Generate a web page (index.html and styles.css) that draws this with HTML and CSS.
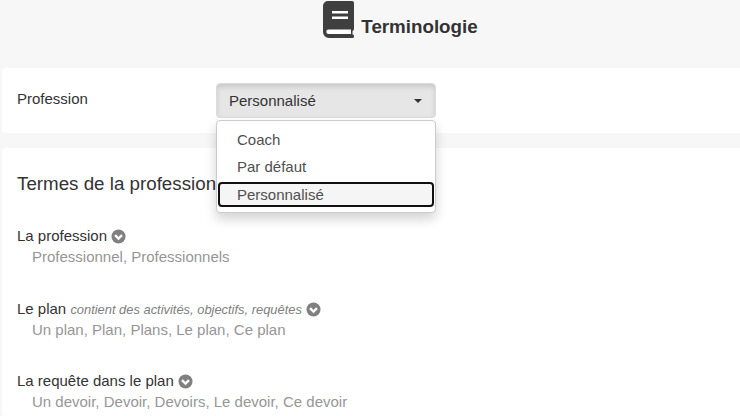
FILE: index.html
```html
<!DOCTYPE html>
<html lang="fr">
<head>
<meta charset="utf-8">
<title>Terminologie</title>
<link rel="stylesheet" href="styles.css">
</head>
<body>
<header class="page-head">
  <svg class="book" viewBox="0 0 32 37" width="32" height="37" aria-hidden="true">
    <path fill="#3f3f3f" d="M5 0H29a2 2 0 0 1 2 2V28a2 2 0 0 1-1.500 1.900V33.500H30a1.300 1.300 0 0 1 1 1.300V35.500a1.500 1.500 0 0 1-1.500 1.500H6a6 6 0 0 1-6-6V5a5 5 0 0 1 5-5Z"/>
    <path fill="#fff" d="M9 10H25V12.500H9ZM9 15.500H25V18H9ZM5.500 28.500H28V33H5.500a2.250 2.250 0 0 1 0-4.500Z"/>
  </svg>
  <h1 class="page-title">Terminologie</h1>
</header>
<main>
  <section class="card profession-card">
    <span class="field-label">Profession</span>
    <div class="select">
      <button class="select-btn" type="button"><span>Personnalisé</span><i class="caret"></i></button>
      <ul class="menu">
        <li class="menu-item">Coach</li>
        <li class="menu-item">Par défaut</li>
        <li class="menu-item active">Personnalisé</li>
      </ul>
    </div>
  </section>
  <section class="card terms-card">
    <h2 class="terms-title">Termes de la profession</h2>
    <div class="term">
      <div class="term-name">La profession <svg class="chev" viewBox="0 0 16 16" width="15" height="15" aria-hidden="true"><circle cx="8" cy="8" r="7.500" fill="#808080"/><path d="M4.300 6.600 8 10.200l3.700-3.600" fill="none" stroke="#fff" stroke-width="2.500"/></svg></div>
      <div class="term-values">Professionnel, Professionnels</div>
    </div>
    <div class="term">
      <div class="term-name">Le plan <em class="term-note">contient des activités, objectifs, requêtes</em> <svg class="chev" viewBox="0 0 16 16" width="15" height="15" aria-hidden="true"><circle cx="8" cy="8" r="7.500" fill="#808080"/><path d="M4.300 6.600 8 10.200l3.700-3.600" fill="none" stroke="#fff" stroke-width="2.500"/></svg></div>
      <div class="term-values">Un plan, Plan, Plans, Le plan, Ce plan</div>
    </div>
    <div class="term">
      <div class="term-name">La requête dans le plan <svg class="chev" viewBox="0 0 16 16" width="15" height="15" aria-hidden="true"><circle cx="8" cy="8" r="7.500" fill="#808080"/><path d="M4.300 6.600 8 10.200l3.700-3.600" fill="none" stroke="#fff" stroke-width="2.500"/></svg></div>
      <div class="term-values">Un devoir, Devoir, Devoirs, Le devoir, Ce devoir</div>
    </div>
  </section>
</main>
</body>
</html>
```
FILE: styles.css
```css
* { box-sizing: border-box; }
html, body { height: 100%; }
body {
  margin: 0;
  height: 416px;
  overflow: hidden;
  background: #f7f7f7;
  color: #333;
  font-family: "Liberation Sans", Arial, sans-serif;
  font-size: 15px;
  line-height: 20px;
}
.page-head {
  height: 68px;
  display: flex;
  justify-content: center;
  align-items: flex-start;
  gap: 6px;
  padding: 1px 0 0 61px;
}
.book { display: block; }
.page-title {
  margin: 15px 0 0;
  font-size: 18.750px;
  line-height: 22px;
  font-weight: 700;
  color: #333;
}
main { padding-left: 2px; }
.card { background: #fff; border-radius: 3px 0 0 3px; }
.profession-card {
  height: 65px;
  margin-bottom: 15px;
  padding: 15px 0 0 15px;
  display: flex;
  align-items: flex-start;
}
.field-label { width: 199px; padding-top: 6px; line-height: 20px; flex: none; }
.select { position: relative; width: 220px; }
.select-btn {
  display: flex;
  justify-content: space-between;
  align-items: center;
  width: 100%;
  height: 35px;
  padding: 0 13px 0 12px;
  border: 1px solid #dcdcdc;
  border-radius: 4px;
  background: #e6e6e6;
  box-shadow: inset 0 3px 5px rgba(0,0,0,.125);
  color: #333;
  font: inherit;
}
.caret {
  width: 0;
  height: 0;
  border-top: 4px solid #333;
  border-left: 4px solid transparent;
  border-right: 4px solid transparent;
}
.menu {
  position: absolute;
  top: 37px;
  left: 0;
  width: 220px;
  margin: 0;
  padding: 5px 0;
  list-style: none;
  background: #fff;
  border: 1px solid #ccc;
  border-radius: 4px;
  box-shadow: 0 6px 12px rgba(0,0,0,.175);
  z-index: 2;
}
.menu-item {
  height: 27px;
  padding: 4px 20px;
  line-height: 20px;
  color: #4f4f4f;
}
.menu-item.active {
  height: 25px;
  margin: 2px 1px 0;
  padding: 1px 17px;
  background: #f5f5f5;
  border: 2px solid #101010;
  border-radius: 4px;
}
.terms-card { height: 268px; padding: 23px 15px 0; overflow: hidden; }
.terms-title {
  margin: 0 0 29px;
  font-size: 18.750px;
  line-height: 26px;
  font-weight: 400;
  color: #333;
}
.term { height: 72.500px; }
.term-name { line-height: 20px; height: 20px; color: #333; }
.term-note { font-size: 12.900px; color: #808080; }
.chev { vertical-align: -3px; }
.term-values { margin-top: 1px; padding-left: 15px; color: #969696; }
```
